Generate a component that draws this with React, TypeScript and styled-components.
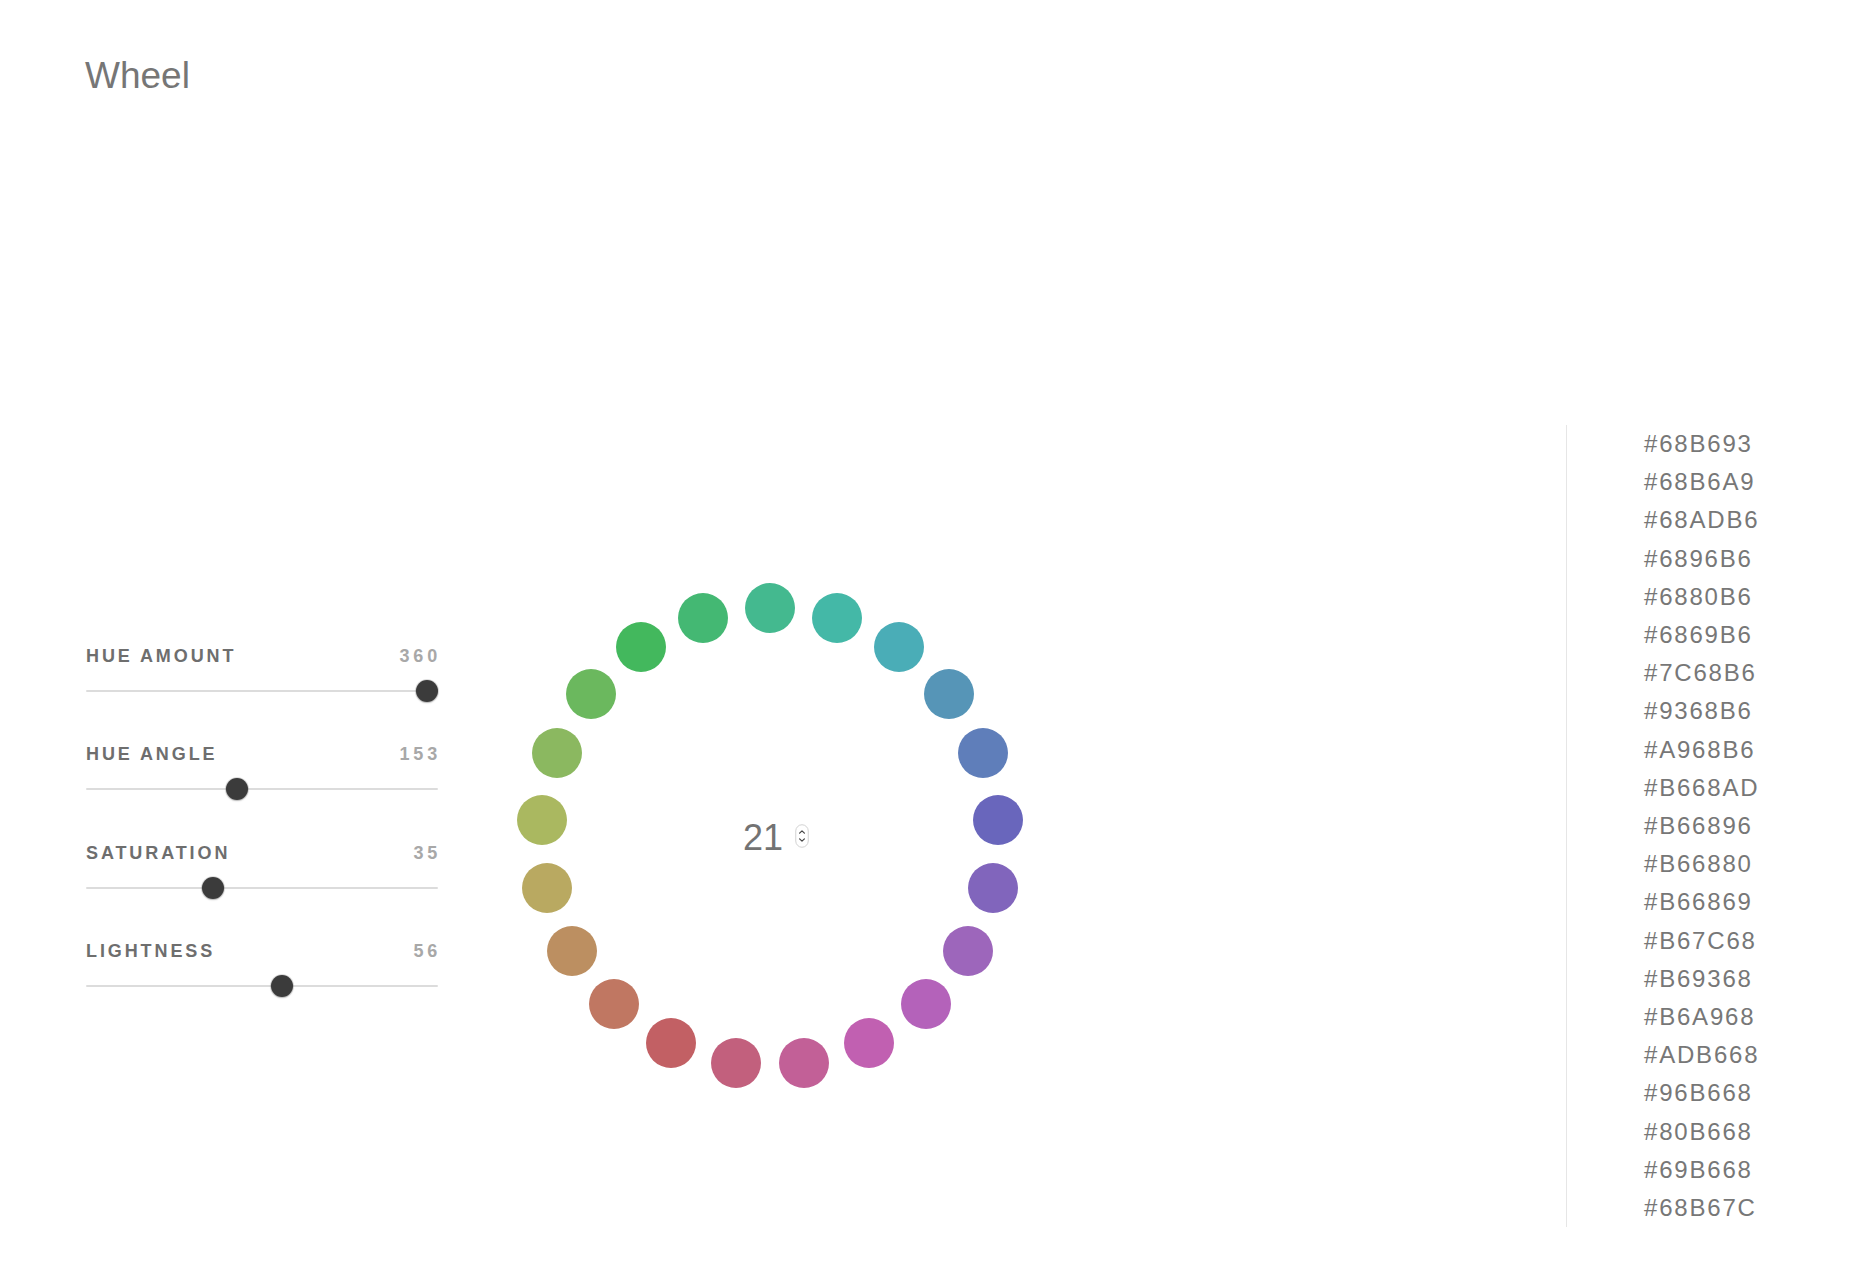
import React from "react";
import styled, { createGlobalStyle } from "styled-components";

const GlobalStyle = createGlobalStyle`
  html, body {
    margin: 0;
    padding: 0;
    background: #ffffff;
  }
  body {
    font-family: "Liberation Sans", Arial, Helvetica, sans-serif;
    color: #777777;
  }
`;

const Page = styled.div`
  padding: 0 86px 0 86px;
  width: 1856px;
  box-sizing: border-box;
`;

const Title = styled.h1`
  margin: 58px 0 0 -1px;
  font-size: 37px;
  line-height: 36px;
  font-weight: 400;
  color: #767676;
`;

const Main = styled.main`
  display: flex;
  align-items: center;
  margin-top: 331px;
`;

const Controls = styled.section`
  width: 352px;
  display: flex;
  flex-direction: column;
  gap: 41.5px;
  margin-bottom: 10px;
`;

const Control = styled.div`
  display: grid;
  row-gap: 13px;
`;

const LabelRow = styled.div`
  display: flex;
  justify-content: space-between;
  align-items: baseline;
  height: 22px;
  line-height: 22px;
  font-size: 18px;
`;

const Label = styled.span`
  font-weight: 700;
  letter-spacing: 2.9px;
  color: #6e6e6e;
`;

const Value = styled.span`
  font-weight: 700;
  letter-spacing: 3.8px;
  color: #a8a8a8;
  margin-right: -3px;
`;

const Track = styled.div`
  position: relative;
  height: 22px;

  &::before {
    content: "";
    position: absolute;
    left: 0;
    right: 0;
    top: 10px;
    height: 2px;
    background: #dcdcdc;
    border-radius: 1px;
  }
`;

const Thumb = styled.span`
  position: absolute;
  top: 0;
  width: 22px;
  height: 22px;
  border-radius: 50%;
  background: #3b3b3b;
  box-shadow: 0 0 0 1px rgba(0, 0, 0, 0.12), 0 1px 2px rgba(0, 0, 0, 0.2);
`;

const THUMB = 22;
const TRACK = 352;

type SliderProps = { label: string; value: number; min: number; max: number };

function Slider({ label, value, min, max }: SliderProps) {
  const left = ((value - min) / (max - min)) * (TRACK - THUMB);
  return (
    <Control>
      <LabelRow>
        <Label>{label}</Label>
        <Value>{value}</Value>
      </LabelRow>
      <Track>
        <Thumb style={{ left }} />
      </Track>
    </Control>
  );
}

const WHEEL = 508;
const DOT = 50;
const RADIUS = 229;

const Wheel = styled.div`
  position: relative;
  width: ${WHEEL}px;
  height: ${WHEEL}px;
  margin-left: 78px;
  margin-top: 21px;
  flex: none;
  display: flex;
  align-items: center;
  justify-content: center;
`;

const Dot = styled.span<{ $color: string }>`
  position: absolute;
  width: ${DOT}px;
  height: ${DOT}px;
  border-radius: 50%;
  background: ${(p) => p.$color};
`;

const Count = styled.div`
  display: flex;
  align-items: center;
  gap: 12px;
  padding-left: 12px;
  margin-top: 3px;
`;

const CountValue = styled.span`
  font-size: 36px;
  line-height: 40px;
  color: #737373;
`;

const Spinner = styled.svg`
  display: block;
  margin-top: -4px;
`;

const Aside = styled.aside`
  margin-left: auto;
  border-left: 1px solid #e6e6e6;
  padding-left: 77px;
  width: 126px;
`;

const HexList = styled.ul`
  list-style: none;
  margin: 0;
  padding: 0;
`;

const Hex = styled.li`
  font-size: 24px;
  line-height: 38.2px;
  letter-spacing: 1.8px;
  color: #777777;
  white-space: nowrap;
`;

const wheelColors = [
  "#44B98F",
  "#44B8A7",
  "#4AADB7",
  "#5695B7",
  "#5F7EBA",
  "#6966BC",
  "#8165BC",
  "#9D66BB",
  "#B462BA",
  "#C160B1",
  "#C26097",
  "#C2607D",
  "#C26064",
  "#C07762",
  "#BC8F61",
  "#B9A961",
  "#AAB860",
  "#8BB860",
  "#6BB85E",
  "#43B85D",
  "#44B873",
];

const hexes = [
  "#68B693",
  "#68B6A9",
  "#68ADB6",
  "#6896B6",
  "#6880B6",
  "#6869B6",
  "#7C68B6",
  "#9368B6",
  "#A968B6",
  "#B668AD",
  "#B66896",
  "#B66880",
  "#B66869",
  "#B67C68",
  "#B69368",
  "#B6A968",
  "#ADB668",
  "#96B668",
  "#80B668",
  "#69B668",
  "#68B67C",
];

export default function App() {
  const n = wheelColors.length;
  return (
    <>
      <GlobalStyle />
      <Page>
        <Title>Wheel</Title>
        <Main>
          <Controls>
            <Slider label="HUE AMOUNT" value={360} min={0} max={360} />
            <Slider label="HUE ANGLE" value={153} min={0} max={360} />
            <Slider label="SATURATION" value={35} min={0} max={100} />
            <Slider label="LIGHTNESS" value={56} min={0} max={100} />
          </Controls>

          <Wheel>
            {wheelColors.map((c, i) => {
              const a = ((-90 + (i * 360) / n) * Math.PI) / 180;
              const x = WHEEL / 2 + RADIUS * Math.cos(a) - DOT / 2;
              const y = WHEEL / 2 + RADIUS * Math.sin(a) - DOT / 2;
              return <Dot key={i} $color={c} style={{ left: x, top: y }} />;
            })}
            <Count>
              <CountValue>{n}</CountValue>
              <Spinner width="14" height="24" viewBox="0 0 14 24" aria-hidden>
                <rect x="0.75" y="0.75" width="12.5" height="22.5" rx="6.25" fill="#fff" stroke="#d2d2d2" strokeWidth="1" />
                <path d="M4.6 9.2 L7 6.8 L9.4 9.2" fill="none" stroke="#444" strokeWidth="1.2" strokeLinecap="round" strokeLinejoin="round" />
                <path d="M4.6 14.8 L7 17.2 L9.4 14.8" fill="none" stroke="#444" strokeWidth="1.2" strokeLinecap="round" strokeLinejoin="round" />
              </Spinner>
            </Count>
          </Wheel>

          <Aside>
            <HexList>
              {hexes.map((h) => (
                <Hex key={h}>{h}</Hex>
              ))}
            </HexList>
          </Aside>
        </Main>
      </Page>
    </>
  );
}
